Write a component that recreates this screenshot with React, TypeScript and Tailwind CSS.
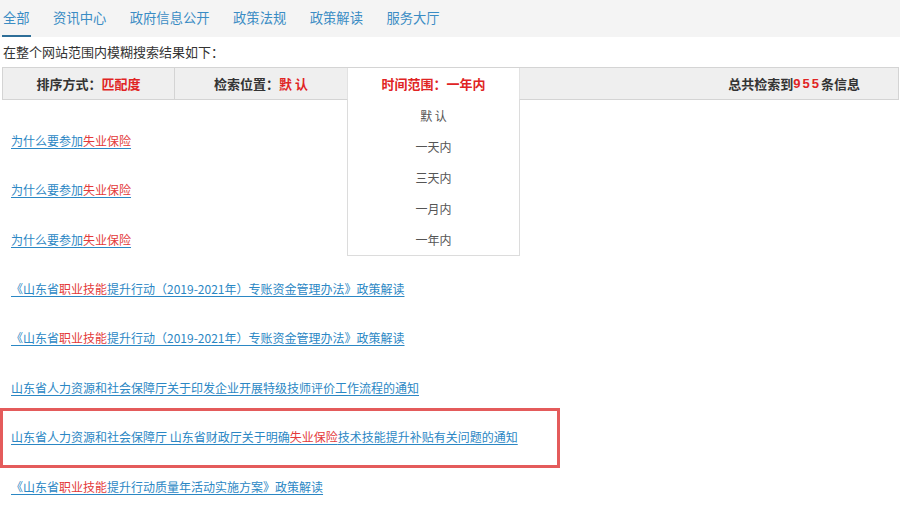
import React from "react";

const font = { fontFamily: '"Microsoft YaHei", "Noto Sans CJK SC", "Noto Sans", sans-serif' };

type Part = { t: string; hl?: boolean };

const tabs = ["全部", "资讯中心", "政府信息公开", "政策法规", "政策解读", "服务大厅"];
const timeOptions = ["默 认", "一天内", "三天内", "一月内", "一年内"];

const results: Part[][] = [
  [{ t: "为什么要参加" }, { t: "失业保险", hl: true }],
  [{ t: "为什么要参加" }, { t: "失业保险", hl: true }],
  [{ t: "为什么要参加" }, { t: "失业保险", hl: true }],
  [{ t: "《山东省" }, { t: "职业技能", hl: true }, { t: "提升行动（2019-2021年）专账资金管理办法》政策解读" }],
  [{ t: "《山东省" }, { t: "职业技能", hl: true }, { t: "提升行动（2019-2021年）专账资金管理办法》政策解读" }],
  [{ t: "山东省人力资源和社会保障厅关于印发企业开展特级技师评价工作流程的通知" }],
  [{ t: "山东省人力资源和社会保障厅 山东省财政厅关于明确" }, { t: "失业保险", hl: true }, { t: "技术技能提升补贴有关问题的通知" }],
  [{ t: "《山东省" }, { t: "职业技能", hl: true }, { t: "提升行动质量年活动实施方案》政策解读" }],
];

export default function App() {
  return (
    <div className="w-[900px] h-[510px] overflow-hidden bg-white text-[#333]" style={font}>
      {/* category tabs */}
      <div className="h-[37px] bg-[#f4f4f4] flex items-stretch pl-[3px] gap-[23.5px]">
        {tabs.map((tab, i) => (
          <div key={tab} className="relative flex items-center text-[13.3px] text-[#3a8cc4] pb-[1px]">
            {tab}
            {i === 0 && <div className="absolute left-[-1px] right-[-1px] bottom-0 h-[2px] bg-[#2d6e98]" />}
          </div>
        ))}
      </div>

      <div className="h-[30px] flex items-center pl-[3px] text-[13px] text-[#333]">在整个网站范围内模糊搜索结果如下：</div>

      {/* filter bar */}
      <div className="relative ml-[2px] w-[897px] h-[33px] flex border border-[#d4d4d4] bg-[#efefef] text-[13px] font-bold">
        <div className="w-[172px] flex items-center justify-center border-r border-[#d4d4d4]">
          排序方式：<span className="text-[#e02424]">匹配度</span>
        </div>
        <div className="w-[172px] flex items-center justify-center">
          检索位置：<span className="text-[#e02424]">默 认</span>
        </div>
        <div className="relative w-[173px] flex items-center justify-center bg-white border-x border-[#e2e2e2]">
          <span className="text-[#e02424]">时间范围：一年内</span>
          {/* open time-range menu */}
          <div className="absolute left-[-1px] right-[-1px] top-[31px] z-10 h-[157px] bg-white border border-t-0 border-[#dcdcdc] pt-[1px] flex flex-col font-normal">
            {timeOptions.map((o) => (
              <div key={o} className="h-[31.3px] flex items-center justify-center text-[12px] text-[#555]">
                {o}
              </div>
            ))}
          </div>
        </div>
        <div className="flex-1 flex items-center justify-end pr-[38px]">
          总共检索到<span className="text-[#e02424] tracking-[2px]" style={{ fontFamily: '"Liberation Sans", sans-serif' }}>955</span>条信息
        </div>
      </div>

      {/* result links */}
      <div className="pt-[16px]">
        {results.map((parts, i) => (
          <div key={i} className="relative h-[49.43px] flex items-center pl-[11px] text-[12px]">
            <a className="text-[#2b87c4] underline underline-offset-[2px] decoration-[#2b87c4]">
              {parts.map((p, j) => (
                <span key={j} className={p.hl ? "text-[#e33a3a]" : ""}>
                  {p.t}
                </span>
              ))}
            </a>
            {i === 6 && (
              <div className="absolute left-[0px] w-[560px] top-[-5px] bottom-[-6px] border-[3px] border-[#e45b5b]" />
            )}
          </div>
        ))}
      </div>
    </div>
  );
}
